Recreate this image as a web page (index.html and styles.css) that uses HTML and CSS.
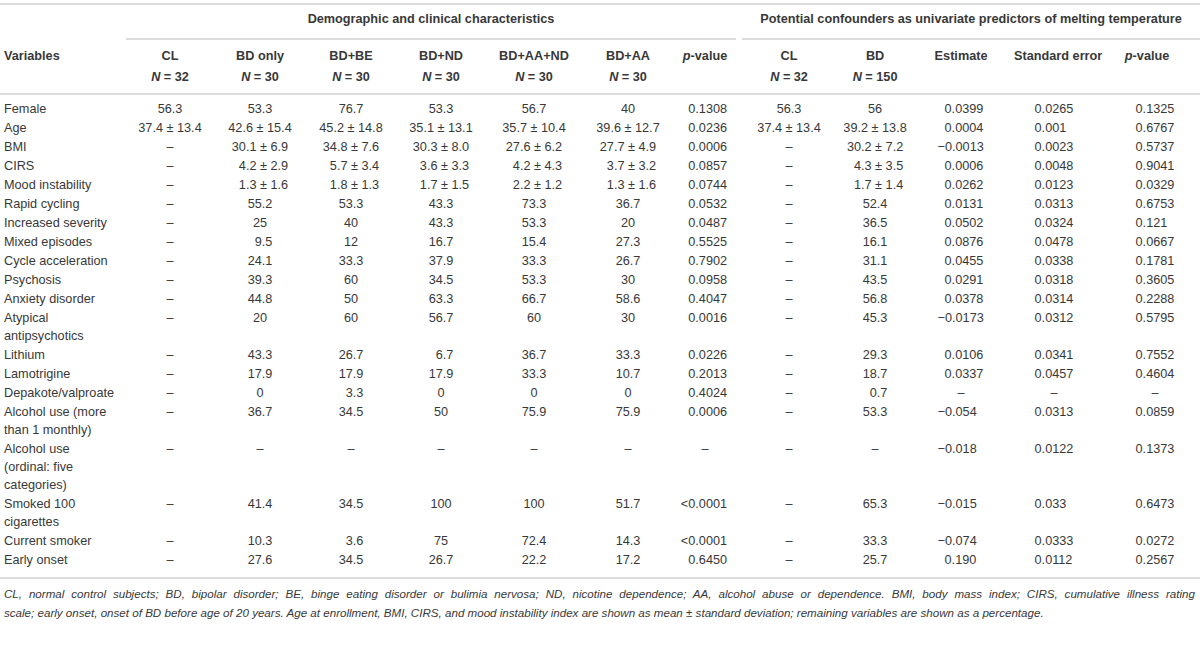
FILE: index.html
```html
<!DOCTYPE html>
<html lang="en">
<head>
<meta charset="utf-8">
<title>Table</title>
<link rel="stylesheet" href="styles.css">
</head>
<body>
<div class="page">
<table class="data">
<colgroup>
<col class="w-var"><col class="w-cl"><col class="w-bdo"><col class="w-be"><col class="w-nd"><col class="w-aand"><col class="w-aa"><col class="w-p1">
<col class="w-cl2"><col class="w-bd"><col class="w-est"><col class="w-se"><col class="w-p2">
</colgroup>
<thead>
<tr class="group">
<th class="blank"></th>
<th colspan="7"><div class="gl">Demographic and clinical characteristics</div></th>
<th colspan="5"><div class="gl g2">Potential confounders as univariate predictors of melting temperature</div></th>
</tr>
<tr class="cols">
<th class="var">Variables</th>
<th>CL<br><i>N</i> = 32</th>
<th>BD only<br><i>N</i> = 30</th>
<th>BD+BE<br><i>N</i> = 30</th>
<th>BD+ND<br><i>N</i> = 30</th>
<th>BD+AA+ND<br><i>N</i> = 30</th>
<th>BD+AA<br><i>N</i> = 30</th>
<th><i>p</i>-value</th>
<th>CL<br><i>N</i> = 32</th>
<th>BD<br><i>N</i> = 150</th>
<th>Estimate</th>
<th>Standard error</th>
<th class="last"><i>p</i>-value</th>
</tr>
</thead>
<tbody>
<tr class="first">
<td class="var">Female</td><td>56.3</td><td>53.3</td><td>76.7</td><td>53.3</td><td>56.7</td><td>40</td><td class="pv">0.1308</td>
<td>56.3</td><td>56</td><td><span class="e">0.0399</span></td><td><span class="s">0.0265</span></td><td class="last"><span class="s">0.1325</span></td>
</tr>
<tr>
<td class="var">Age</td><td>37.4 ± 13.4</td><td>42.6 ± 15.4</td><td>45.2 ± 14.8</td><td>35.1 ± 13.1</td><td>35.7 ± 10.4</td><td>39.6 ± 12.7</td><td class="pv">0.0236</td>
<td>37.4 ± 13.4</td><td>39.2 ± 13.8</td><td><span class="e">0.0004</span></td><td><span class="s">0.001</span></td><td class="last"><span class="s">0.6767</span></td>
</tr>
<tr>
<td class="var">BMI</td><td>–</td><td>30.1 ± 6.9</td><td>34.8 ± 7.6</td><td>30.3 ± 8.0</td><td>27.6 ± 6.2</td><td>27.7 ± 4.9</td><td class="pv">0.0006</td>
<td>–</td><td>30.2 ± 7.2</td><td><span class="e m">−0.0013</span></td><td><span class="s">0.0023</span></td><td class="last"><span class="s">0.5737</span></td>
</tr>
<tr>
<td class="var">CIRS</td><td>–</td><td>&#8199;4.2 ± 2.9</td><td>&#8199;5.7 ± 3.4</td><td>&#8199;3.6 ± 3.3</td><td>&#8199;4.2 ± 4.3</td><td>&#8199;3.7 ± 3.2</td><td class="pv">0.0857</td>
<td>–</td><td>&#8199;4.3 ± 3.5</td><td><span class="e">0.0006</span></td><td><span class="s">0.0048</span></td><td class="last"><span class="s">0.9041</span></td>
</tr>
<tr>
<td class="var">Mood instability</td><td>–</td><td>&#8199;1.3 ± 1.6</td><td>&#8199;1.8 ± 1.3</td><td>&#8199;1.7 ± 1.5</td><td>&#8199;2.2 ± 1.2</td><td>&#8199;1.3 ± 1.6</td><td class="pv">0.0744</td>
<td>–</td><td>&#8199;1.7 ± 1.4</td><td><span class="e">0.0262</span></td><td><span class="s">0.0123</span></td><td class="last"><span class="s">0.0329</span></td>
</tr>
<tr>
<td class="var">Rapid cycling</td><td>–</td><td>55.2</td><td>53.3</td><td>43.3</td><td>73.3</td><td>36.7</td><td class="pv">0.0532</td>
<td>–</td><td>52.4</td><td><span class="e">0.0131</span></td><td><span class="s">0.0313</span></td><td class="last"><span class="s">0.6753</span></td>
</tr>
<tr>
<td class="var">Increased severity</td><td>–</td><td>25</td><td>40</td><td>43.3</td><td>53.3</td><td>20</td><td class="pv">0.0487</td>
<td>–</td><td>36.5</td><td><span class="e">0.0502</span></td><td><span class="s">0.0324</span></td><td class="last"><span class="s">0.121</span></td>
</tr>
<tr>
<td class="var">Mixed episodes</td><td>–</td><td>&#8199;9.5</td><td>12</td><td>16.7</td><td>15.4</td><td>27.3</td><td class="pv">0.5525</td>
<td>–</td><td>16.1</td><td><span class="e">0.0876</span></td><td><span class="s">0.0478</span></td><td class="last"><span class="s">0.0667</span></td>
</tr>
<tr>
<td class="var">Cycle acceleration</td><td>–</td><td>24.1</td><td>33.3</td><td>37.9</td><td>33.3</td><td>26.7</td><td class="pv">0.7902</td>
<td>–</td><td>31.1</td><td><span class="e">0.0455</span></td><td><span class="s">0.0338</span></td><td class="last"><span class="s">0.1781</span></td>
</tr>
<tr>
<td class="var">Psychosis</td><td>–</td><td>39.3</td><td>60</td><td>34.5</td><td>53.3</td><td>30</td><td class="pv">0.0958</td>
<td>–</td><td>43.5</td><td><span class="e">0.0291</span></td><td><span class="s">0.0318</span></td><td class="last"><span class="s">0.3605</span></td>
</tr>
<tr>
<td class="var">Anxiety disorder</td><td>–</td><td>44.8</td><td>50</td><td>63.3</td><td>66.7</td><td>58.6</td><td class="pv">0.4047</td>
<td>–</td><td>56.8</td><td><span class="e">0.0378</span></td><td><span class="s">0.0314</span></td><td class="last"><span class="s">0.2288</span></td>
</tr>
<tr>
<td class="var">Atypical antipsychotics</td><td>–</td><td>20</td><td>60</td><td>56.7</td><td>60</td><td>30</td><td class="pv">0.0016</td>
<td>–</td><td>45.3</td><td><span class="e m">−0.0173</span></td><td><span class="s">0.0312</span></td><td class="last"><span class="s">0.5795</span></td>
</tr>
<tr>
<td class="var">Lithium</td><td>–</td><td>43.3</td><td>26.7</td><td>&#8199;6.7</td><td>36.7</td><td>33.3</td><td class="pv">0.0226</td>
<td>–</td><td>29.3</td><td><span class="e">0.0106</span></td><td><span class="s">0.0341</span></td><td class="last"><span class="s">0.7552</span></td>
</tr>
<tr>
<td class="var">Lamotrigine</td><td>–</td><td>17.9</td><td>17.9</td><td>17.9</td><td>33.3</td><td>10.7</td><td class="pv">0.2013</td>
<td>–</td><td>18.7</td><td><span class="e">0.0337</span></td><td><span class="s">0.0457</span></td><td class="last"><span class="s">0.4604</span></td>
</tr>
<tr>
<td class="var">Depakote/valproate</td><td>–</td><td>0</td><td>&#8199;3.3</td><td>0</td><td>0</td><td>0</td><td class="pv">0.4024</td>
<td>–</td><td>&#8199;0.7</td><td>–</td><td>–</td><td class="last">–</td>
</tr>
<tr>
<td class="var">Alcohol use (more than 1 monthly)</td><td>–</td><td>36.7</td><td>34.5</td><td>50</td><td>75.9</td><td>75.9</td><td class="pv">0.0006</td>
<td>–</td><td>53.3</td><td><span class="e m">−0.054</span></td><td><span class="s">0.0313</span></td><td class="last"><span class="s">0.0859</span></td>
</tr>
<tr>
<td class="var">Alcohol use (ordinal: five categories)</td><td>–</td><td>–</td><td>–</td><td>–</td><td>–</td><td>–</td><td class="pd">–</td>
<td>–</td><td>–</td><td><span class="e m">−0.018</span></td><td><span class="s">0.0122</span></td><td class="last"><span class="s">0.1373</span></td>
</tr>
<tr>
<td class="var">Smoked 100 cigarettes</td><td>–</td><td>41.4</td><td>34.5</td><td>100</td><td>100</td><td>51.7</td><td class="pv">&lt;0.0001</td>
<td>–</td><td>65.3</td><td><span class="e m">−0.015</span></td><td><span class="s">0.033</span></td><td class="last"><span class="s">0.6473</span></td>
</tr>
<tr>
<td class="var">Current smoker</td><td>–</td><td>10.3</td><td>&#8199;3.6</td><td>75</td><td>72.4</td><td>14.3</td><td class="pv">&lt;0.0001</td>
<td>–</td><td>33.3</td><td><span class="e m">−0.074</span></td><td><span class="s">0.0333</span></td><td class="last"><span class="s">0.0272</span></td>
</tr>
<tr class="lastrow">
<td class="var">Early onset</td><td>–</td><td>27.6</td><td>34.5</td><td>26.7</td><td>22.2</td><td>17.2</td><td class="pv">0.6450</td>
<td>–</td><td>25.7</td><td><span class="e">0.190</span></td><td><span class="s">0.0112</span></td><td class="last"><span class="s">0.2567</span></td>
</tr>
</tbody>
</table>
<p class="note"><span class="nl1">CL, normal control subjects; BD, bipolar disorder; BE, binge eating disorder or bulimia nervosa; ND, nicotine dependence; AA, alcohol abuse or dependence. BMI, body mass index; CIRS, cumulative illness rating</span> <span class="nl2">scale; early onset, onset of BD before age of 20 years. Age at enrollment, BMI, CIRS, and mood instability index are shown as mean ± standard deviation; remaining variables are shown as a percentage.</span></p>
</div>
</body>
</html>
```
FILE: styles.css
```css
* { box-sizing: border-box; }
html, body { margin: 0; padding: 0; background: #fff; }
body {
  font-family: "Liberation Sans", Arial, Helvetica, sans-serif;
  font-size: 12.7px;
  color: #383838;
}
.page { width: 1200px; padding-top: 3px; }

table.data {
  width: 1200px;
  table-layout: fixed;
  border-collapse: collapse;
  border-top: 2px solid #dcdcdc;
  border-bottom: 2px solid #dcdcdc;
}
.w-var { width: 126px; }
.w-cl { width: 88px; }
.w-bdo { width: 92px; }
.w-be { width: 90px; }
.w-nd { width: 90px; }
.w-aand { width: 96px; }
.w-aa { width: 92px; }
.w-p1 { width: 62px; }
.w-cl2 { width: 106px; }
.w-bd { width: 66px; }
.w-est { width: 106px; }
.w-se { width: 80px; }
.w-p2 { width: 106px; }

th { font-weight: bold; text-align: center; padding: 0; }
th i, td i { font-style: italic; }

.group th { padding: 0; vertical-align: top; }
.gl {
  padding: 5px 0 10px;
  line-height: 18px;
  border-bottom: 2px solid #dcdcdc;
  white-space: nowrap;
}
.gl.g2 { margin-left: 6px; }

.cols th {
  line-height: 21px;
  padding: 6px 0 5px;
  vertical-align: top;
  border-bottom: 2px solid #dcdcdc;
  white-space: nowrap;
}
.cols th.var { text-align: left; padding-left: 4px; }

td {
  line-height: 18px;
  padding: 0.5px 0;
  text-align: center;
  vertical-align: top;
  white-space: nowrap;
}
td.var {
  text-align: left;
  padding-left: 4px;
  padding-right: 10px;
  white-space: normal;
}
tr.first td { padding-top: 5px; }
tr.lastrow td { padding-bottom: 8px; }

td.pv { text-align: right; padding-right: 9px; }
td.pd { text-align: center; }
.last { padding-left: 16px; }
td.last { padding-left: 16px; }

.e {
  display: inline-block;
  width: 47px;
  padding-left: 7px;
  text-align: left;
}
.e.m { padding-left: 0; }
.s {
  display: inline-block;
  width: 39px;
  text-align: left;
}

.note {
  margin: 0;
  padding: 5px 5px 0 4px;
  line-height: 19px;
  font-style: italic;
  font-size: 11.6px;
}
.nl1 {
  display: block;
  text-align: justify;
  text-align-last: justify;
}
.nl2 { display: block; }
```
